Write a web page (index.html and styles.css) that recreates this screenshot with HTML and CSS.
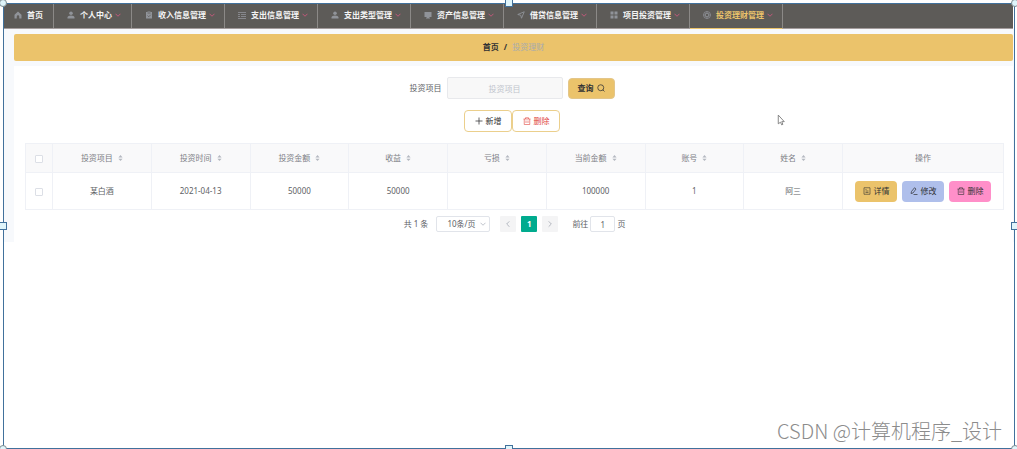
FILE: index.html
```html
<!DOCTYPE html>
<html lang="zh-CN">
<head>
<meta charset="utf-8">
<title>投资理财管理</title>
<link rel="stylesheet" href="styles.css">
</head>
<body>
<svg class="sprite" aria-hidden="true">
  <symbol id="home" viewBox="0 0 16 16"><path d="M8 1 1 7.500V15h4.500v-4a2.500 2.500 0 0 1 5 0v4H15V7.500z" fill="currentColor"/></symbol>
  <symbol id="user" viewBox="0 0 16 16"><circle cx="8" cy="4.500" r="3.500" fill="currentColor"/><path d="M1 15v-2c0-2.500 3-4 7-4s7 1.500 7 4v2z" fill="currentColor"/></symbol>
  <symbol id="clip" viewBox="0 0 16 16"><path d="M2 2h3V1h6v1h3v13H2z" fill="currentColor"/><path d="M5 4h6M5 9l2.500 2.500L11.500 7.500" fill="none" stroke="#5d5b58" stroke-width="1.500"/></symbol>
  <symbol id="list" viewBox="0 0 16 16"><path d="M0 3h16M6 7h10M6 11h10M0 15h16M0 7h4M0 11h4" fill="none" stroke="currentColor" stroke-width="1.600"/></symbol>
  <symbol id="screen" viewBox="0 0 16 16"><path d="M1 2h14v10H1zM6 12h4v1h2v2H4v-2h2z" fill="currentColor"/></symbol>
  <symbol id="send" viewBox="0 0 16 16"><path d="M14.500 1.500 1.500 7l6 1.500L9 14.500z" fill="none" stroke="currentColor" stroke-width="1.800" stroke-linejoin="round"/></symbol>
  <symbol id="grid" viewBox="0 0 16 16"><path d="M1 1h6v6H1zM9 1h6v6H9zM1 9h6v6H1zM9 9h6v6H9z" fill="currentColor"/></symbol>
  <symbol id="ball" viewBox="0 0 16 16"><g fill="none" stroke="currentColor" stroke-width="1.500"><circle cx="8" cy="8" r="7"/><path d="M1 8h4M11 8h4M8 1v4M8 11v4M5 5h6v6H5z"/></g></symbol>
  <symbol id="down" viewBox="0 0 12 12"><path d="m1 3.500 5 5 5-5" fill="none" stroke="currentColor" stroke-width="2"/></symbol>
  <symbol id="prev" viewBox="0 0 12 12"><path d="M8 2 4 6l4 4" fill="none" stroke="currentColor" stroke-width="1.500"/></symbol>
  <symbol id="next" viewBox="0 0 12 12"><path d="m4 2 4 4-4 4" fill="none" stroke="currentColor" stroke-width="1.500"/></symbol>
  <symbol id="search" viewBox="0 0 16 16"><g fill="none" stroke="currentColor" stroke-width="1.500"><circle cx="7.500" cy="7.500" r="6"/><path d="m11.500 11.500 3.500 3.500"/></g></symbol>
  <symbol id="plus" viewBox="0 0 16 16"><path d="M8 1v14M1 8h14" fill="none" stroke="currentColor" stroke-width="1.500"/></symbol>
  <symbol id="trash" viewBox="0 0 16 16"><path d="M1 4h14M5 4V1.500h6V4M2.500 4v11h11V4M6 7v5M10 7v5" fill="none" stroke="currentColor" stroke-width="1.200"/></symbol>
  <symbol id="doc" viewBox="0 0 16 16"><path d="M2 1.500h12v13H2zM5 5h2M5 8h6M5 11h6" fill="none" stroke="currentColor" stroke-width="1.200"/></symbol>
  <symbol id="edit" viewBox="0 0 16 16"><path d="M9 1.500 12 4 6 12l-4 1 1-4zM7 15h8" fill="none" stroke="currentColor" stroke-width="1.400"/></symbol>
  <symbol id="sort" viewBox="0 0 12 16"><path d="m6 1 5 5.500H1zM6 15l5-5.500H1z" fill="currentColor"/></symbol>
</svg>

<div class="frame">
  <nav class="nav">
    <a class="nav-item nav-home" href="#"><svg class="icon"><use href="#home"/></svg>首页</a>
    <a class="nav-item" href="#"><svg class="icon"><use href="#user"/></svg>个人中心<svg class="caret"><use href="#down"/></svg></a>
    <a class="nav-item" href="#"><svg class="icon"><use href="#clip"/></svg>收入信息管理<svg class="caret"><use href="#down"/></svg></a>
    <a class="nav-item" href="#"><svg class="icon"><use href="#list"/></svg>支出信息管理<svg class="caret"><use href="#down"/></svg></a>
    <a class="nav-item" href="#"><svg class="icon"><use href="#user"/></svg>支出类型管理<svg class="caret"><use href="#down"/></svg></a>
    <a class="nav-item" href="#"><svg class="icon"><use href="#screen"/></svg>资产信息管理<svg class="caret"><use href="#down"/></svg></a>
    <a class="nav-item" href="#"><svg class="icon"><use href="#send"/></svg>借贷信息管理<svg class="caret"><use href="#down"/></svg></a>
    <a class="nav-item" href="#"><svg class="icon"><use href="#grid"/></svg>项目投资管理<svg class="caret"><use href="#down"/></svg></a>
    <a class="nav-item active" href="#"><svg class="icon"><use href="#ball"/></svg>投资理财管理<svg class="caret"><use href="#down"/></svg></a>
  </nav>

  <main class="main">
    <div class="crumbs"><a class="crumb" href="#">首页</a><span>/</span><span class="crumb-current">投资理财</span></div>
    <section class="panel">
      <form class="search">
        <label for="project">投资项目</label>
        <input class="field" id="project" type="text" placeholder="投资项目">
        <button class="btn btn-query" type="button">查询<svg class="icon"><use href="#search"/></svg></button>
      </form>
      <div class="actions">
        <button class="btn btn-line" type="button"><svg class="icon"><use href="#plus"/></svg>新增</button>
        <button class="btn btn-line danger" type="button"><svg class="icon"><use href="#trash"/></svg>删除</button>
      </div>
      <table class="table">
        <thead>
          <tr>
            <th class="col-check"><input class="check" type="checkbox" aria-label="全选"></th>
            <th>投资项目<svg class="sort"><use href="#sort"/></svg></th>
            <th>投资时间<svg class="sort"><use href="#sort"/></svg></th>
            <th>投资金额<svg class="sort"><use href="#sort"/></svg></th>
            <th>收益<svg class="sort"><use href="#sort"/></svg></th>
            <th>亏损<svg class="sort"><use href="#sort"/></svg></th>
            <th>当前金额<svg class="sort"><use href="#sort"/></svg></th>
            <th>账号<svg class="sort"><use href="#sort"/></svg></th>
            <th>姓名<svg class="sort"><use href="#sort"/></svg></th>
            <th class="col-ops">操作</th>
          </tr>
        </thead>
        <tbody>
          <tr>
            <td><input class="check" type="checkbox" aria-label="选择"></td>
            <td>某白酒</td>
            <td>2021-04-13</td>
            <td>50000</td>
            <td>50000</td>
            <td></td>
            <td>100000</td>
            <td>1</td>
            <td>阿三</td>
            <td>
              <div class="ops">
                <button class="btn btn-detail" type="button"><svg class="icon"><use href="#doc"/></svg>详情</button>
                <button class="btn btn-edit" type="button"><svg class="icon"><use href="#edit"/></svg>修改</button>
                <button class="btn btn-delete" type="button"><svg class="icon"><use href="#trash"/></svg>删除</button>
              </div>
            </td>
          </tr>
        </tbody>
      </table>
      <div class="pager">
        <span>共 1 条</span>
        <span class="size"><select class="size-select" aria-label="每页条数"><option>10条/页</option></select><svg class="size-caret"><use href="#down"/></svg></span>
        <div class="pages">
          <button class="page" type="button" aria-label="上一页"><svg class="icon"><use href="#prev"/></svg></button>
          <button class="page current" type="button">1</button>
          <button class="page" type="button" aria-label="下一页"><svg class="icon"><use href="#next"/></svg></button>
        </div>
        <div class="jump"><label for="jump">前往</label><input class="jump-field" id="jump" type="text" value="1"><span>页</span></div>
      </div>
    </section>
  </main>

  <svg class="cursor" viewBox="0 0 7 11"><path d="M1 1v8l2-1.500 1.200 2.500 1-.5L4.200 7H6.500z" fill="#fff" stroke="#777" stroke-width=".8"/></svg>
  <div class="watermark">CSDN @计算机程序_设计</div>
  <i class="handle round t l"></i><i class="handle t c"></i><i class="handle round t r"></i>
  <i class="handle m l"></i><i class="handle m r"></i>
  <i class="handle round b l"></i><i class="handle b c"></i><i class="handle round b r"></i>
</div>
</body>
</html>
```
FILE: styles.css
```css
* { box-sizing: border-box; }
body {
  margin: 0;
  padding: 3px 2px 0 3px;
  overflow: hidden;
  background: #fff;
  color: #606266;
  font: 8px/12px "Noto Sans", "Noto Sans CJK SC", sans-serif;
}
button, input, select { font: inherit; color: inherit; margin: 0; padding: 0; }
a { color: inherit; text-decoration: none; }
.sprite { position: absolute; width: 0; height: 0; }
.icon { width: 8px; height: 8px; flex: none; }

.frame {
  position: relative;
  min-height: calc(100vh - 3px);
  border: 1px solid #41719c;
}

.nav {
  display: flex;
  background: #5d5b58;
  border-bottom: 1px solid #a39c9c;
  margin-right: 1px;
}
.nav-item {
  display: flex;
  align-items: center;
  min-width: 78px;
  padding: 5px 9px 7px 13px;
  border-right: 1px solid #8b8987;
  color: #f4f4f4;
  font-weight: bold;
  white-space: nowrap;
}
.nav-item .icon { margin-right: 5px; color: #909399; }
.nav-home { min-width: 0; padding: 5px 10px 7px; }
.caret { width: 6px; height: 6px; margin-left: 3px; color: #c0587a; }
.active { color: #ebc36b; margin-bottom: -1px; border-bottom: 1px solid #ebc36b; }

.main { background: #f7f9fc; padding: 5px 1px 0 10px; }
.crumbs {
  display: flex;
  justify-content: center;
  gap: 5px;
  padding: 7px 0 8px;
  border-radius: 2px;
  background: #ebc36b;
  color: #303133;
  font-weight: bold;
}
.crumb-current { color: #a9abae; font-weight: normal; }

.panel { margin-top: 5px; padding: 11px 9px 10px 11px; background: #fff; }
.search, .actions, .pager { display: flex; justify-content: center; align-items: center; }
.search, .actions { padding-right: 5px; }
.search { gap: 5px; }
.field {
  width: 116px;
  height: 22px;
  border: 1px solid #e8e9ec;
  border-radius: 2px;
  background: #f8f8f8;
  text-align: center;
}
.field::placeholder { color: #c0c4cc; opacity: 1; }
.btn {
  display: flex;
  justify-content: center;
  align-items: center;
  gap: 3px;
  height: 21px;
  border: 0;
  border-radius: 4px;
  color: #303133;
  white-space: nowrap;
}
.btn-query { width: 47px; background: #ebc36b; font-weight: bold; border: 1px solid #e3c68a; }
.btn-line { width: 48px; height: 22px; background: #fff; border: 1px solid #ebcf8c; }
.danger { color: #e0443e; }
.actions { margin: 11px 0; }

.table {
  width: 100%;
  table-layout: fixed;
  border-collapse: collapse;
}
.table th, .table td { padding: 0; border: 1px solid #eff1f6; text-align: center; }
.table th { height: 29px; background: #f9f9fa; color: #7d8086; font-weight: normal; }
.table td { height: 37px; }
.col-check { width: 27px; }
.col-ops { width: 161px; }
.sort { width: 5px; height: 8px; margin-left: 5px; color: #b4b8c0; vertical-align: -1px; }
.check {
  appearance: none;
  width: 8px;
  height: 8px;
  border: 1px solid #dcdfe6;
  border-radius: 1px;
  background: #fff;
  vertical-align: middle;
}
.ops { display: flex; justify-content: center; gap: 5px; }
.ops .btn { width: 42px; }
.btn-detail { background: #ebc36b; }
.btn-edit { background: #afbfeb; }
.btn-delete { background: #ff8fc9; }

.pager { margin-top: 6px; gap: 8px; }
.size { position: relative; }
.size-select {
  display: block;
  appearance: none;
  width: 54px;
  height: 16px;
  padding-left: 10px;
  border: 1px solid #e1e4ea;
  border-radius: 2px;
  background: #fff;
}
.size-caret { position: absolute; right: 4px; top: 5px; width: 6px; height: 6px; color: #c0c4cc; }
.pages { display: flex; gap: 5px; margin: 0 6px 0 2px; }
.page {
  display: flex;
  justify-content: center;
  align-items: center;
  width: 16px;
  height: 16px;
  border: 0;
  border-radius: 1px;
  background: #f4f4f5;
  color: #b4b8c0;
}
.current { background: #00ab8e; color: #fff; font-weight: bold; }
.jump { display: flex; align-items: center; gap: 2px; }
.jump-field {
  width: 25px;
  height: 16px;
  border: 1px solid #e1e4ea;
  border-radius: 2px;
  background: #fff;
  text-align: center;
}

.cursor { position: absolute; left: 773px; top: 110px; width: 8px; height: 12px; }
.watermark {
  position: absolute;
  right: 12px;
  bottom: 5px;
  color: #8c8c8c;
  font: 300 20px/24px "Noto Sans CJK SC", sans-serif;
}

.handle {
  position: absolute;
  width: 8px;
  height: 8px;
  border: 1px solid #41719c;
  background: #dff5fb;
}
.round { border-radius: 50%; border-color: #7c8b91; }
.t { top: -5px; }
.m { top: calc(50% - 4px); }
.b { bottom: -5px; }
.l { left: -5px; }
.c { left: calc(50% - 4px); }
.r { right: -5px; }
```
